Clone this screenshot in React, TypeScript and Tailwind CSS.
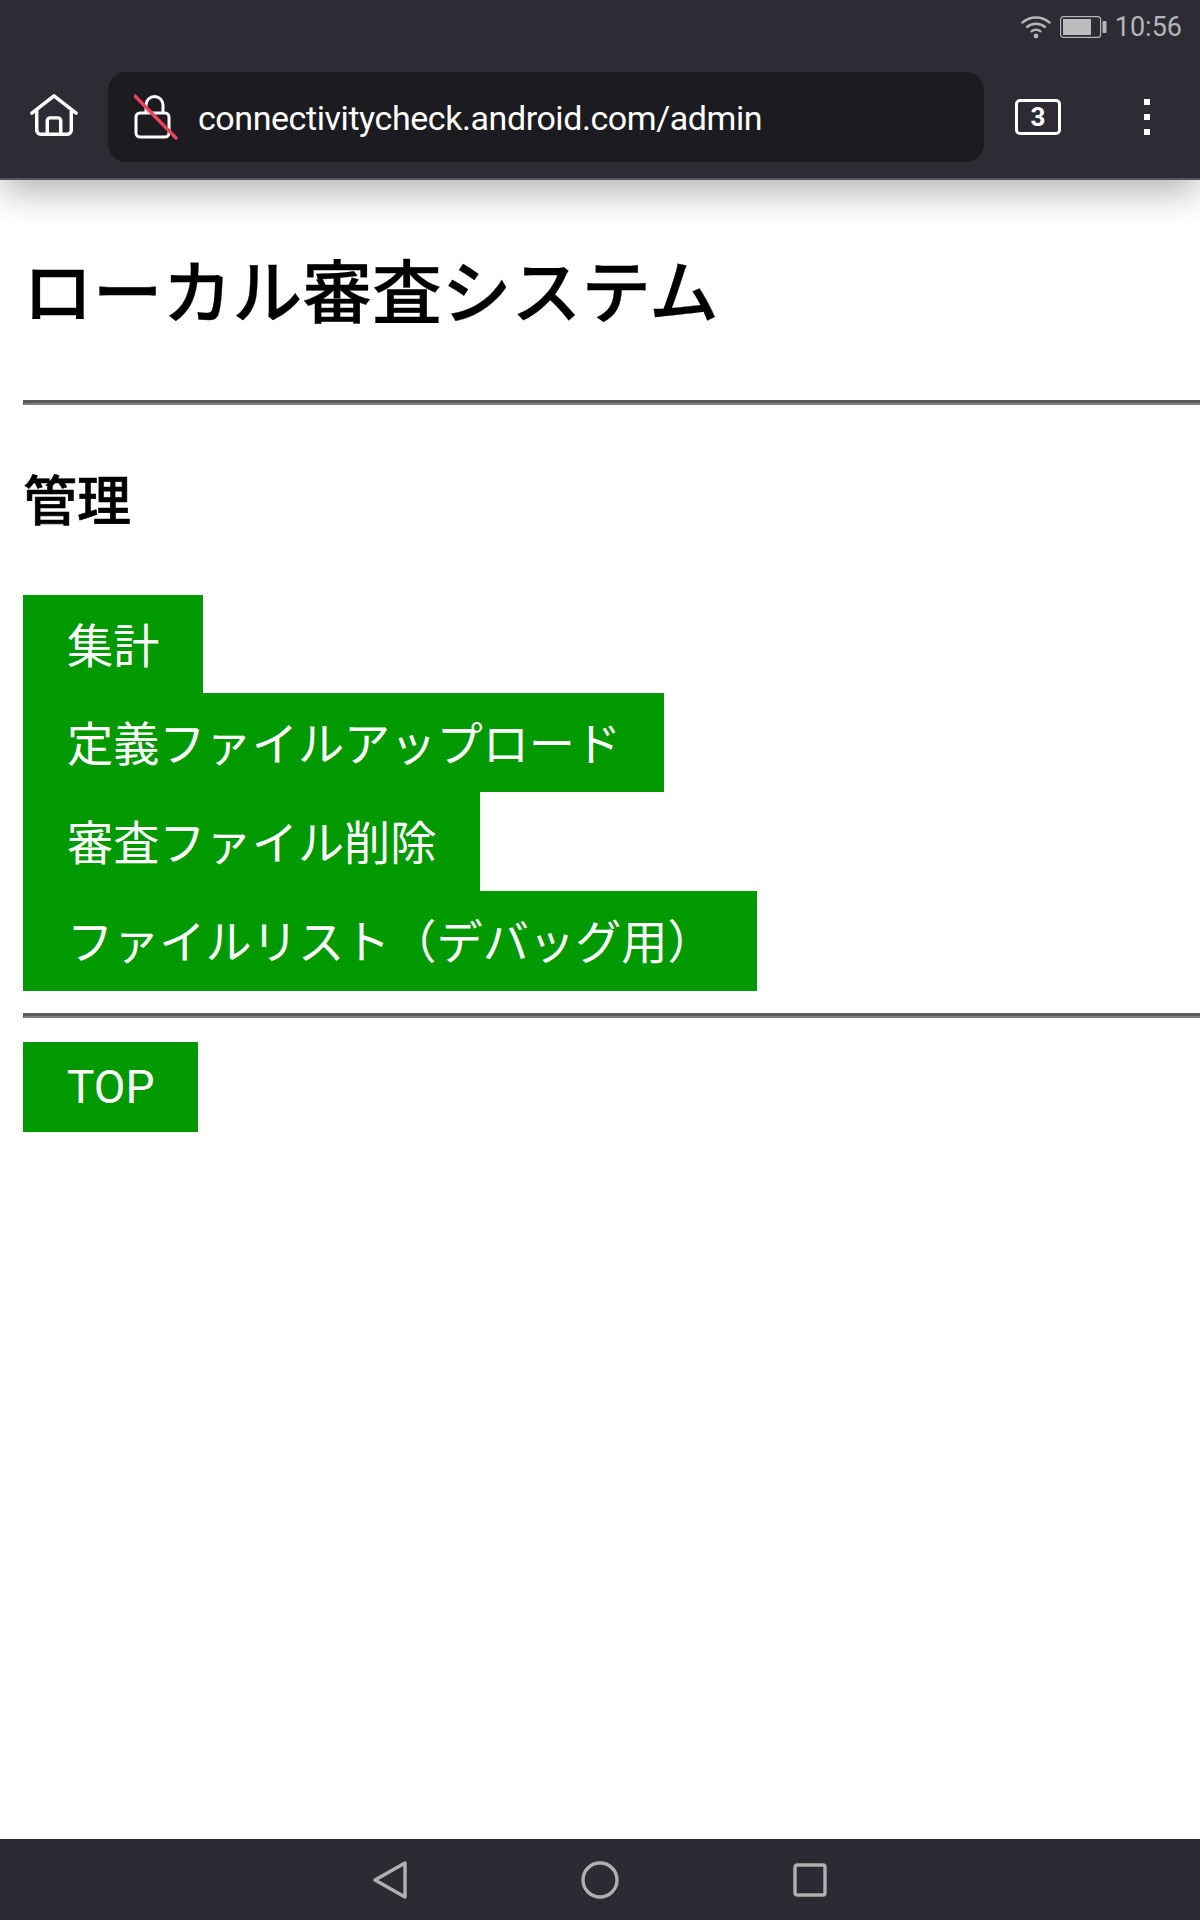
import React from "react";

function Btn({ children, cls }: { children: React.ReactNode; cls: string }) {
  return (
    <a className={`block bg-[#009900] text-white text-[46.2px] leading-[63px] pt-[21px] pl-[44px] ${cls}`}>
      {children}
    </a>
  );
}

function Hr() {
  return (
    <div className="h-[5px] border-t-[3px] border-b-[2px] border-l-[2px] border-t-[#5a5a5a] border-l-[#5a5a5a] border-b-[#808080]" />
  );
}

export default function App() {
  return (
    <div className="h-[1920px] w-[1200px] flex flex-col overflow-hidden bg-white font-['Roboto','Noto_Sans_CJK_JP',sans-serif]">
      <header className="relative z-10 h-[180px] shrink-0 bg-[#2d2c35] border-b-2 border-[#55545c] shadow-[0_14px_34px_-2px_rgba(0,0,0,0.3)] flex flex-col">
        <div className="h-[54px] flex items-center justify-end pr-[18px]">
          <svg width="30" height="24" viewBox="0 0 30 24" fill="none" stroke="#b5b5b8" strokeWidth="2.4" strokeLinecap="round" className="mr-[9px]">
            <path d="M1.5 7.5C9 .8 21 .8 28.5 7.5" />
            <path d="M6 12c5-4.4 13-4.4 18 0" />
            <path d="M10.5 16.3c2.6-2.2 6.4-2.2 9 0" />
            <circle cx="15" cy="21" r="2.4" fill="#b5b5b8" stroke="none" />
          </svg>
          <svg width="47" height="22" viewBox="0 0 47 22" fill="none" className="mr-[8px]">
            <rect x="0.6" y="0.6" width="40" height="20.8" rx="3" stroke="#b5b5b8" strokeWidth="1.2" />
            <rect x="3" y="3" width="28" height="16" fill="#bdbdbf" />
            <rect x="42.5" y="5" width="4" height="12" rx="1" fill="#b5b5b8" />
          </svg>
          <span className="text-[#b5b5b8] text-[27px] leading-none">10:56</span>
        </div>
        <div className="flex items-start pt-[18px]">
          <div className="w-[108px] flex justify-center pt-[21px]">
            <svg width="48" height="44" viewBox="0 0 50 44" fill="none" stroke="#fff" strokeWidth="3.6" strokeLinejoin="round" strokeLinecap="round">
              <path d="M2 20 25 2l23 18" />
              <path d="M7 18v20a4 4 0 0 0 4 4h28a4 4 0 0 0 4-4V18" />
              <path d="M18 42V28a3 3 0 0 1 3-3h8a3 3 0 0 1 3 3v14" />
            </svg>
          </div>
          <div className="w-[876px] h-[90px] rounded-[18px] bg-[#1c1b20] flex items-center">
            <svg width="44" height="46" viewBox="0 0 44 46" fill="none" className="ml-[26px] mr-[20px]">
              <path d="M12 19V11a8.5 8.5 0 0 1 8.5-8.5A8.5 8.5 0 0 1 29 11v8" stroke="#fff" strokeWidth="3" />
              <rect x="2" y="19" width="33" height="24" rx="4" stroke="#fff" strokeWidth="3" />
              <path d="M1 2l41 42" stroke="#f0425a" strokeWidth="3.4" strokeLinecap="round" />
            </svg>
            <span className="text-white text-[34px] tracking-[-0.43px] leading-none pt-[2px]">connectivitycheck.android.com/admin</span>
          </div>
          <div className="flex-1 flex items-center h-[90px]">
            <div className="ml-[31px] w-[46px] h-[36px] border-[3.5px] border-white rounded-[5px] flex items-center justify-center text-white font-bold text-[26px] leading-none">
              3
            </div>
            <div className="ml-[83px] flex flex-col gap-[9px]">
              <i className="block w-[6px] h-[6px] bg-white" />
              <i className="block w-[6px] h-[6px] bg-white" />
              <i className="block w-[6px] h-[6px] bg-white" />
            </div>
          </div>
        </div>
      </header>

      <main className="flex-1 pl-[23px] pt-[74px] text-black">
        <h1 className="text-[69.8px] leading-[80px] font-medium [-webkit-text-stroke:0.3px_#000] mb-[66px]">ローカル審査システム</h1>
        <Hr />
        <h2 className="text-[54px] leading-[60px] font-medium [-webkit-text-stroke:0.6px_#000] mt-[68px] mb-[62px]">管理</h2>
        <div className="flex flex-col items-start">
          <Btn cls="w-[180px] pb-[14px]">集計</Btn>
          <Btn cls="w-[641px] pb-[15px]">定義ファイルアップロード</Btn>
          <Btn cls="w-[457px] pb-[15px]">審査ファイル削除</Btn>
          <Btn cls="w-[734px] pb-[16px]">ファイルリスト（デバッグ用）</Btn>
        </div>
        <div className="mt-[22px] mb-[24px]"><Hr /></div>
        <a className="block w-[175px] bg-[#009900] text-white text-[46px] leading-[54px] py-[18px] pl-[44px]">TOP</a>
      </main>

      <nav className="h-[81px] shrink-0 bg-[#2c2b34] flex items-center justify-center">
        <div className="w-[210px] flex justify-center">
          <svg width="34" height="38" viewBox="0 0 34 38" fill="none" stroke="#b0b0b0" strokeWidth="3.4" strokeLinejoin="round">
            <path d="M32 2v34L2 19z" />
          </svg>
        </div>
        <div className="w-[210px] flex justify-center">
          <svg width="38" height="38" viewBox="0 0 38 38" fill="none" stroke="#b0b0b0" strokeWidth="3.4">
            <circle cx="19" cy="19" r="17" />
          </svg>
        </div>
        <div className="w-[210px] flex justify-center">
          <svg width="34" height="34" viewBox="0 0 34 34" fill="none" stroke="#b0b0b0" strokeWidth="3.4" strokeLinejoin="round">
            <rect x="2" y="2" width="30" height="30" rx="2" />
          </svg>
        </div>
      </nav>
    </div>
  );
}
